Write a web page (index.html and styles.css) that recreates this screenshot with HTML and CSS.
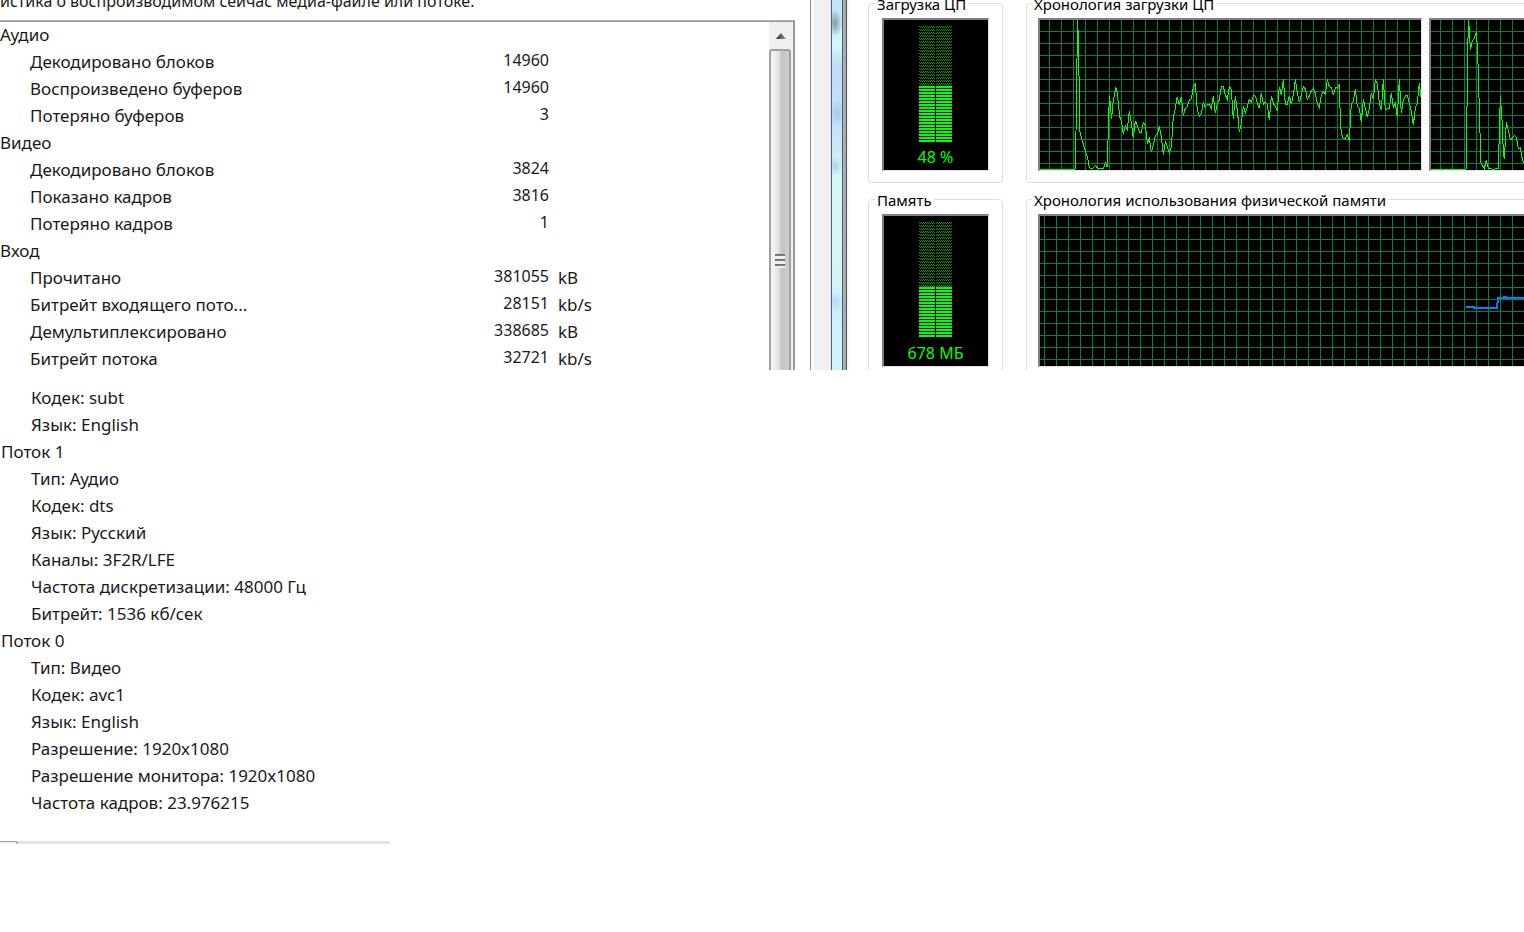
FILE: index.html
```html
<!DOCTYPE html>
<html lang="ru">
<head>
    <meta charset="UTF-8">
    <meta name="viewport" content="width=device-width, initial-scale=1.0">
    <title>Статистика воспроизведения</title>
    <link rel="stylesheet" href="styles.css">
</head>
<body>
    <main>
        <div class="top-row">
            <section class="media-window">
                <div class="media-content">
                    <p class="intro">истика о воспроизводимом сейчас медиа-файле или потоке.</p>
                    <div class="stats-box">
                        <table class="stats">
                            <colgroup>
                                <col class="name-col">
                                <col class="value-col">
                                <col>
                            </colgroup>
                            <tbody>
                                <tr><th colspan="3">Аудио</th></tr>
                                <tr><td class="name">Декодировано блоков</td><td class="value">14960</td><td></td></tr>
                                <tr><td class="name">Воспроизведено буферов</td><td class="value">14960</td><td></td></tr>
                                <tr><td class="name">Потеряно буферов</td><td class="value">3</td><td></td></tr>
                                <tr><th colspan="3">Видео</th></tr>
                                <tr><td class="name">Декодировано блоков</td><td class="value">3824</td><td></td></tr>
                                <tr><td class="name">Показано кадров</td><td class="value">3816</td><td></td></tr>
                                <tr><td class="name">Потеряно кадров</td><td class="value">1</td><td></td></tr>
                                <tr><th colspan="3">Вход</th></tr>
                                <tr><td class="name">Прочитано</td><td class="value">381055</td><td class="unit">kB</td></tr>
                                <tr><td class="name">Битрейт входящего пото...</td><td class="value">28151</td><td class="unit">kb/s</td></tr>
                                <tr><td class="name">Демультиплексировано</td><td class="value">338685</td><td class="unit">kB</td></tr>
                                <tr><td class="name">Битрейт потока</td><td class="value">32721</td><td class="unit">kb/s</td></tr>
                            </tbody>
                        </table>
                        <div class="scrollbar">
                            <button class="scroll-up" aria-label="Вверх">
                                <svg width="12" height="8" viewBox="0 0 12 8">
                                    <defs>
                                        <linearGradient id="arrow" x1="0" x2="1">
                                            <stop offset="0" stop-color="#222"/>
                                            <stop offset="1" stop-color="#999"/>
                                        </linearGradient>
                                    </defs>
                                    <path d="M6 1L11 7H1z" fill="url(#arrow)"/>
                                </svg>
                            </button>
                            <div class="scroll-thumb">
                                <div class="grip"></div>
                            </div>
                        </div>
                    </div>
                </div>
                <div class="window-frame">
                    <div class="frame-inner"></div>
                    <div class="frame-glass"></div>
                    <div class="frame-outer"></div>
                </div>
            </section>

            <section class="monitor">
                <fieldset>
                    <legend>Загрузка ЦП</legend>
                    <div class="screen meter">
                        <svg width="33" height="116">
                            <defs>
                                <pattern id="dim" width="2" height="3" patternUnits="userSpaceOnUse">
                                    <rect width="1" height="1" fill="#00a000"/>
                                    <rect x="1" y="1" width="1" height="1" fill="#00a000"/>
                                </pattern>
                                <pattern id="lit" width="33" height="3" patternUnits="userSpaceOnUse">
                                    <rect width="33" height="2" fill="#00ff00"/>
                                </pattern>
                            </defs>
                            <rect width="33" height="60" fill="url(#dim)"/>
                            <rect y="60" width="33" height="56" fill="url(#lit)"/>
                            <rect x="16" width="1" height="116" fill="#000"/>
                        </svg>
                        <span>48 %</span>
                    </div>
                </fieldset>

                <fieldset>
                    <legend>Хронология загрузки ЦП</legend>
                    <div class="charts">
                        <div class="screen chart cpu">
                            <svg viewBox="60 60 1143 450" shape-rendering="crispEdges">
                                <polyline points="60,508 165,508 168,395 171,175 173,60 176,145 178,305 180,395 186,420 192,440 198,458 203,475 208,503 214,507 220,503 227,496 233,505 244,506 250,505 257,488 262,502 266,340 269,287 272,330 275,357 278,315 283,285 287,260 292,278 296,320 299,350 304,362 310,402 316,378 322,388 328,332 334,370 340,414 346,362 352,378 358,397 364,397 370,368 376,375 382,430 388,416 394,457 400,435 406,406 412,404 418,378 424,410 430,465 436,425 442,440 448,460 454,440 460,350 466,325 472,290 478,316 484,290 490,348 496,325 502,320 508,300 514,297 520,260 526,252 532,330 538,348 544,340 550,308 556,322 562,313 568,314 574,325 580,287 586,340 592,310 598,300 604,260 610,260 616,285 622,298 628,260 634,268 640,358 646,288 652,330 658,397 664,370 670,318 676,340 682,320 688,298 694,306 700,287 706,288 712,308 718,325 724,278 730,313 736,307 742,313 748,360 754,287 760,310 766,320 772,330 778,260 784,285 790,238 796,313 802,313 808,287 814,312 820,285 826,238 832,280 838,307 844,285 850,260 856,266 862,298 868,288 874,272 880,265 886,280 892,310 898,322 904,285 910,275 916,283 922,238 928,260 934,262 940,286 946,262 952,265 958,252 961,355 964,400 970,416 976,415 982,404 988,424 994,310 1000,305 1006,266 1012,320 1018,325 1024,367 1030,298 1036,325 1042,352 1048,325 1054,278 1060,298 1066,238 1072,250 1078,310 1084,330 1090,238 1096,330 1102,327 1108,325 1114,278 1120,322 1126,310 1132,352 1138,238 1144,340 1150,300 1156,288 1162,287 1168,310 1174,335 1180,376 1186,325 1192,308 1198,250 1203,292"/>
                            </svg>
                        </div>
                        <div class="screen chart cpu">
                            <svg viewBox="483 60 1143 450" shape-rendering="crispEdges">
                                <polyline points="483,508 588,508 590,395 593,175 595,60 598,85 601,150 607,122 613,115 619,95 622,140 625,215 628,330 631,430 633,490 643,505 649,480 655,505 670,508 685,505 688,400 691,287 696,360 700,455 703,478 709,367 715,390 721,420 727,415 733,406 739,412 745,447 751,443 757,478 763,490"/>
                            </svg>
                        </div>
                    </div>
                </fieldset>

                <fieldset>
                    <legend>Память</legend>
                    <div class="screen meter">
                        <svg width="33" height="116">
                            <rect width="33" height="65" fill="url(#dim)"/>
                            <g transform="translate(0 65)">
                                <rect width="33" height="50" fill="url(#lit)"/>
                            </g>
                            <rect x="16" width="1" height="116" fill="#000"/>
                        </svg>
                        <span>678 МБ</span>
                    </div>
                </fieldset>

                <fieldset>
                    <legend>Хронология использования физической памяти</legend>
                    <div class="charts">
                        <div class="screen chart memory">
                            <svg viewBox="-690 78 2316 450" shape-rendering="crispEdges">
                                <polyline points="588,351 612,351 612,354 681,354 684,324 702,324 703,321 707,321 708,324 1626,324"/>
                            </svg>
                        </div>
                    </div>
                </fieldset>
            </section>
        </div>

        <section class="streams">
            <ul>
                <li>Кодек: subt</li>
                <li>Язык: English</li>
            </ul>
            <h2>Поток 1</h2>
            <ul>
                <li>Тип: Аудио</li>
                <li>Кодек: dts</li>
                <li>Язык: Русский</li>
                <li>Каналы: 3F2R/LFE</li>
                <li>Частота дискретизации: 48000 Гц</li>
                <li>Битрейт: 1536 кб/сек</li>
            </ul>
            <h2>Поток 0</h2>
            <ul>
                <li>Тип: Видео</li>
                <li>Кодек: avc1</li>
                <li>Язык: English</li>
                <li>Разрешение: 1920x1080</li>
                <li>Разрешение монитора: 1920x1080</li>
                <li>Частота кадров: 23.976215</li>
            </ul>
            <div class="h-scrollbar">
                <div class="h-thumb"></div>
            </div>
        </section>
    </main>
</body>
</html>
```
FILE: styles.css
```css
* {
    box-sizing: border-box;
}
body {
    margin: 0;
    background-color: #fff;
    color: #1a1a1a;
    font-family: "Noto Sans", "Open Sans", sans-serif;
    font-size: 17px;
    line-height: 27px;
}
.top-row {
    display: flex;
    height: 370px;
    overflow: hidden;
}

/* Media player window */
.media-window {
    display: flex;
    flex: none;
    width: 850px;
}
.media-content {
    flex: 1;
    padding-right: 15px;
}
.intro {
    margin: -12px 0 5px;
    font-size: 16px;
}
.stats-box {
    display: flex;
    justify-content: space-between;
    border-top: 1px solid #aab2b9;
    border-right: 2px solid #8f9aa3;
    box-shadow: inset 0 1px #8f9aa3;
}
.stats {
    width: 620px;
    table-layout: fixed;
    border-collapse: collapse;
}
.name-col {
    width: 400px;
}
.value-col {
    width: 149px;
}
.stats th,
.stats td {
    height: 27px;
    padding: 0;
    text-align: left;
    font-weight: normal;
    white-space: nowrap;
}
.stats .name {
    padding-left: 30px;
}
.stats .value {
    padding-bottom: 2px;
    text-align: right;
    font-size: 16px;
    line-height: 25px;
}
.stats .unit {
    padding-left: 9px;
}

.scrollbar {
    display: flex;
    flex-direction: column;
    width: 24px;
    margin-top: 1px;
    background-color: #efefef;
}
.scroll-up {
    height: 27px;
    padding: 0;
    border: none;
    background: none;
    line-height: 0;
}
.scroll-thumb {
    display: flex;
    flex: 1;
    justify-content: center;
    margin-right: 2px;
    border: 2px solid #a0a0a0;
    border-radius: 3px 3px 0 0;
    background: linear-gradient(to right, #f6f6f6 0, #e4e4e6 40%, #c4c4c8 60%, #d0d0d2 100%);
}
.grip {
    width: 10px;
    height: 14px;
    margin-top: 203px;
    background: repeating-linear-gradient(#666 0, #888 2px, #eee 2px, #eee 5px);
}

.window-frame {
    display: flex;
    width: 40px;
}
.frame-inner {
    width: 21px;
    border-left: 1px solid #8c8c90;
    background: linear-gradient(to right, #fafafa 3px, #f0f0f0 3px);
}
.frame-glass {
    width: 12px;
    border-left: 1px solid #4c6470;
    border-right: 1px solid #4a5a62;
    background:
        radial-gradient(ellipse 7px 14px at 3px 23px, #7e9cab, transparent),
        radial-gradient(ellipse 8px 14px at 5px 113px, #a9c9ee, transparent),
        radial-gradient(ellipse 8px 10px at 3px 166px, #b2d4f4, transparent),
        radial-gradient(ellipse 8px 10px at 3px 302px, #b6d8fa, transparent),
        linear-gradient(#bfe2f8 0, #d4fafa 45px, #bfdcf6 65px, #c4e2fb 130px, #d4f8f4 180px, #d6f6f2 260px, #cdeffd 310px, #cdf4ff 100%);
}
.frame-outer {
    width: 7px;
    background: linear-gradient(to right, #b8b8b8 0, #a0a0a0 3px, #55565a 3px, #55565a 4px, #eee 4px, #fff 7px);
}

/* Performance graphs */
.monitor {
    display: grid;
    flex: 1;
    grid-template-columns: 135px max-content;
    align-content: start;
    gap: 4px 23px;
    min-width: 0;
    margin-top: -9px;
    padding-left: 18px;
    color: #000;
    font-family: "Noto Sans", "DejaVu Sans Condensed", sans-serif;
    font-size: 16px;
    line-height: 22px;
}
fieldset {
    min-width: 0;
    margin: 0;
    padding: 3px 13px 11px;
    border: 1px solid #d5dfe5;
    border-radius: 4px;
}
fieldset:nth-child(even) {
    padding: 3px 11px 11px;
}
legend {
    margin-left: -7px;
    padding: 2px 2px 0;
    font-size: 15px;
    white-space: nowrap;
}
fieldset:nth-child(even) legend {
    margin-left: -6px;
}
.charts {
    display: flex;
    gap: 7px;
}
.screen {
    height: 153px;
    border: solid;
    border-width: 2px 1px 1px 2px;
    border-color: #808080 #e3e3e3 #e3e3e3 #808080;
    background-color: #000;
}
.meter {
    display: flex;
    flex-direction: column;
    align-items: center;
    gap: 4px;
    padding: 6px 1px 0 0;
    color: #00ff00;
}
.chart {
    flex: none;
    background-image:
        linear-gradient(#008040 1px, transparent 1px),
        linear-gradient(to right, #008040 1px, transparent 1px);
    background-size: 12px 12px;
    background-position: 9px 11px;
}
.chart svg {
    display: block;
    width: 100%;
    height: 100%;
}
.chart polyline {
    fill: none;
    stroke: #00ff00;
    stroke-width: 3;
}
.cpu {
    width: 384px;
}
.memory {
    width: 775px;
    background-position: 4px 11px;
}
.memory polyline {
    stroke: #0080ff;
    stroke-width: 6;
}

/* Stream details */
.streams {
    width: 390px;
    padding-top: 14px;
}
.streams ul {
    margin: 0;
    padding-left: 31px;
    list-style: none;
}
.streams h2 {
    margin: 0;
    padding-left: 1px;
    font-size: 17px;
    font-weight: normal;
}
.h-scrollbar {
    height: 3px;
    margin-top: 25px;
    background-color: #e4e4e4;
}
.h-thumb {
    width: 18px;
    height: 3px;
    border-top: 1px solid #999;
    border-right: 1px solid #999;
    border-top-right-radius: 3px;
    background-color: #f2f2f2;
}
```
